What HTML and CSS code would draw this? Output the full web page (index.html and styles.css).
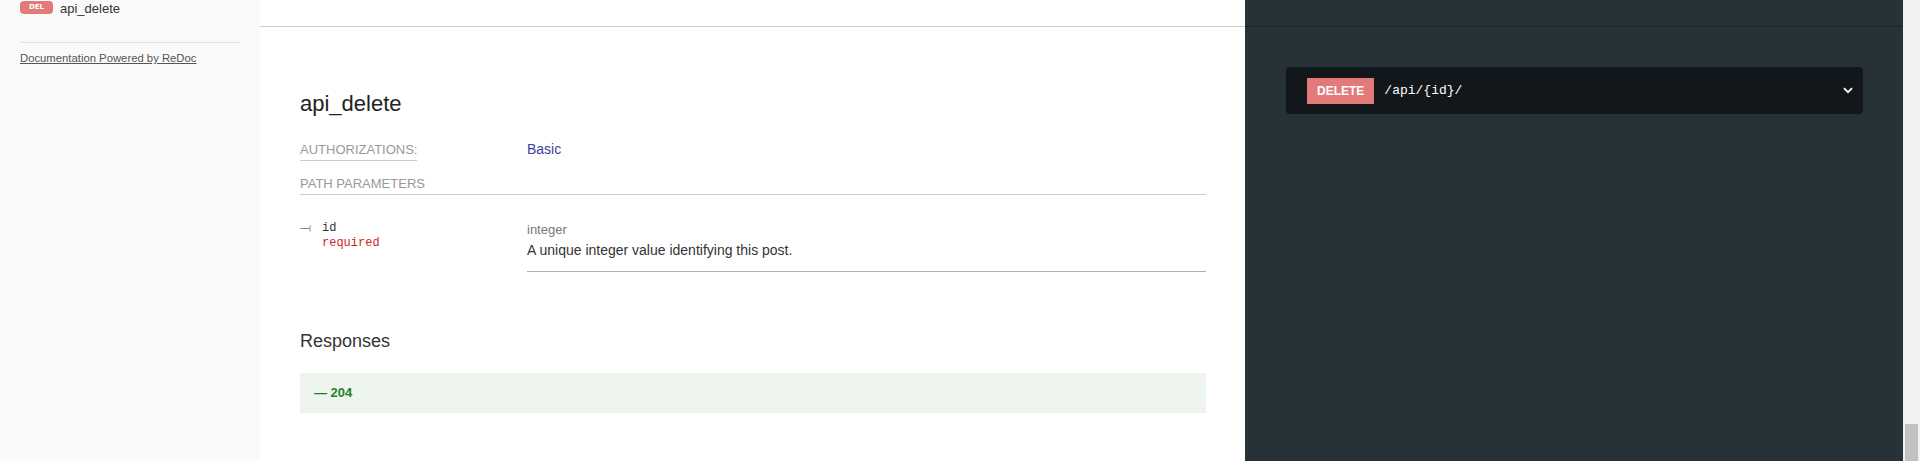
FILE: index.html
```html
<!DOCTYPE html>
<html lang="en">
<head>
<meta charset="utf-8">
<title>api_delete</title>
<link rel="stylesheet" href="styles.css">
</head>
<body>
<div class="page">
  <aside class="sidebar">
    <div class="menu-item">
      <span class="op-type">del</span>
      <span class="menu-label">api_delete</span>
    </div>
    <div class="powered">
      <a href="#" class="powered-link">Documentation Powered by ReDoc</a>
    </div>
  </aside>

  <main class="middle">
    <div class="prev-end"></div>
    <section class="operation">
      <h2 class="op-title">api_delete</h2>
      <div class="auth-row">
        <div class="auth-label-col"><span class="auth-label">Authorizations:</span></div>
        <div class="auth-value">Basic</div>
      </div>
      <div class="params-title">Path parameters</div>
      <div class="param-row">
        <div class="param-name">
          <svg class="tree-icon" width="11" height="7" viewBox="0 0 11 7"><path d="M0 3.5H9.5M10 0.5V6.5" stroke="#8a8a8a" stroke-width="1" fill="none"/></svg>
          <div class="param-name-text">
            <span class="pname">id</span>
            <span class="required">required</span>
          </div>
        </div>
        <div class="param-info">
          <div class="param-type">integer</div>
          <div class="param-desc">A unique integer value identifying this post.</div>
        </div>
      </div>
      <h3 class="responses-title">Responses</h3>
      <div class="response success"><strong>— 204</strong></div>
    </section>
  </main>

  <aside class="right">
    <div class="prev-end dark"></div>
    <div class="right-body">
      <div class="endpoint">
        <span class="http-verb">delete</span>
        <span class="endpoint-path">/api/{id}/</span>
        <svg class="chevron" width="10" height="7" viewBox="0 0 10 7"><path d="M1 1.2L5 5.2L9 1.2" stroke="#ffffff" stroke-width="1.8" fill="none"/></svg>
      </div>
    </div>
  </aside>

  <div class="scrollbar"><div class="thumb"></div></div>
</div>
</body>
</html>
```

FILE: styles.css
```css
* { box-sizing: border-box; }
html, body { margin: 0; padding: 0; }
body {
  font-family: "Liberation Sans", Arial, sans-serif;
  color: #333;
  overflow: hidden;
}
.page {
  display: flex;
  width: 1920px;
  height: 461px;
}

/* sidebar */
.sidebar {
  flex: 0 0 260px;
  background: #fafafa;
}
.menu-item {
  display: flex;
  align-items: flex-start;
  padding: 0 20px;
  height: 20px;
}
.op-type {
  width: 33px;
  height: 13px;
  margin-top: 1px;
  margin-right: 7px;
  border-radius: 4px;
  background: #e27a7a;
  color: #fff;
  font-family: "DejaVu Sans", Verdana, sans-serif;
  font-size: 7px;
  font-weight: bold;
  line-height: 13px;
  text-align: center;
  text-transform: uppercase;
}
.menu-label {
  font-size: 13px;
  line-height: 17px;
  color: #333;
}
.powered {
  margin: 22px 20px 0;
  border-top: 1px solid #e1e1e1;
  padding-top: 8px;
  font-size: 11.3px;
  line-height: 15px;
}
.powered-link {
  font-size: 11.3px;
  line-height: 15px;
  color: #555;
  text-decoration: underline;
}

/* middle */
.middle {
  flex: 0 0 985px;
  background: #fff;
}
.prev-end {
  height: 27px;
  border-bottom: 1px solid rgba(0, 0, 0, 0.2);
}
.prev-end.dark { border-bottom-color: rgba(0, 0, 0, 0.25); }
.operation {
  padding: 59px 39px 0 40px;
}
.op-title {
  margin: 0;
  font-size: 22px;
  font-weight: normal;
  line-height: 35px;
  color: #222;
}
.auth-row {
  display: flex;
  margin-top: 18px;
  line-height: 20px;
}
.auth-label-col { flex: 0 0 227px; }
.auth-label {
  display: inline-block;
  font-size: 13px;
  text-transform: uppercase;
  color: #999;
  border-bottom: 1px solid #ccc;
}
.auth-value {
  font-size: 14px;
  color: #40409a;
}
.params-title {
  margin-top: 12px;
  font-size: 13px;
  line-height: 21px;
  text-transform: uppercase;
  color: #999;
  border-bottom: 1px solid #ccc;
}
.param-row {
  display: flex;
}
.param-name {
  flex: 0 0 227px;
  display: flex;
  align-items: flex-start;
  padding-top: 26px;
}
.tree-icon {
  margin-top: 4px;
  margin-right: 11px;
  flex: none;
}
.param-name-text {
  display: flex;
  flex-direction: column;
  font-family: "Liberation Mono", "Courier New", monospace;
  font-size: 12px;
  line-height: 15px;
}
.pname { color: #333; }
.required { color: #d41f1c; }
.param-info {
  flex: 1;
  padding: 25px 0 11px;
  border-bottom: 1px solid #9fb4be;
}
.param-type {
  font-size: 13px;
  line-height: 20px;
  color: #777;
}
.param-desc {
  font-size: 14px;
  line-height: 20px;
  color: #333;
}
.responses-title {
  margin: 57px 0 0;
  font-size: 18px;
  font-weight: normal;
  line-height: 24px;
  color: #333;
}
.response {
  margin-top: 20px;
  padding: 10px 14px;
  font-size: 13px;
  line-height: 20px;
}
.response.success {
  background: #edf5ee;
  color: #1d8127;
}

/* right panel */
.right {
  flex: 0 0 658px;
  background: #263238;
}
.right-body {
  padding: 40px 40px 0 41px;
}
.endpoint {
  display: flex;
  align-items: center;
  height: 47px;
  padding: 0 10px 0 21px;
  background: #11171a;
  border-radius: 4px;
}
.http-verb {
  padding: 3px 10px;
  background: #e27a7a;
  color: #fff;
  font-size: 12px;
  font-weight: bold;
  line-height: 20px;
  text-transform: uppercase;
}
.endpoint-path {
  flex: 1;
  margin-left: 10px;
  font-family: "Liberation Mono", "Courier New", monospace;
  font-size: 13px;
  color: #fff;
}
.chevron { flex: none; }

/* scrollbar */
.scrollbar {
  flex: 0 0 17px;
  background: #f1f1f1;
  display: flex;
  flex-direction: column;
  justify-content: flex-end;
}
.thumb {
  height: 37px;
  margin: 0 2px;
  background: #c1c1c1;
}
```
